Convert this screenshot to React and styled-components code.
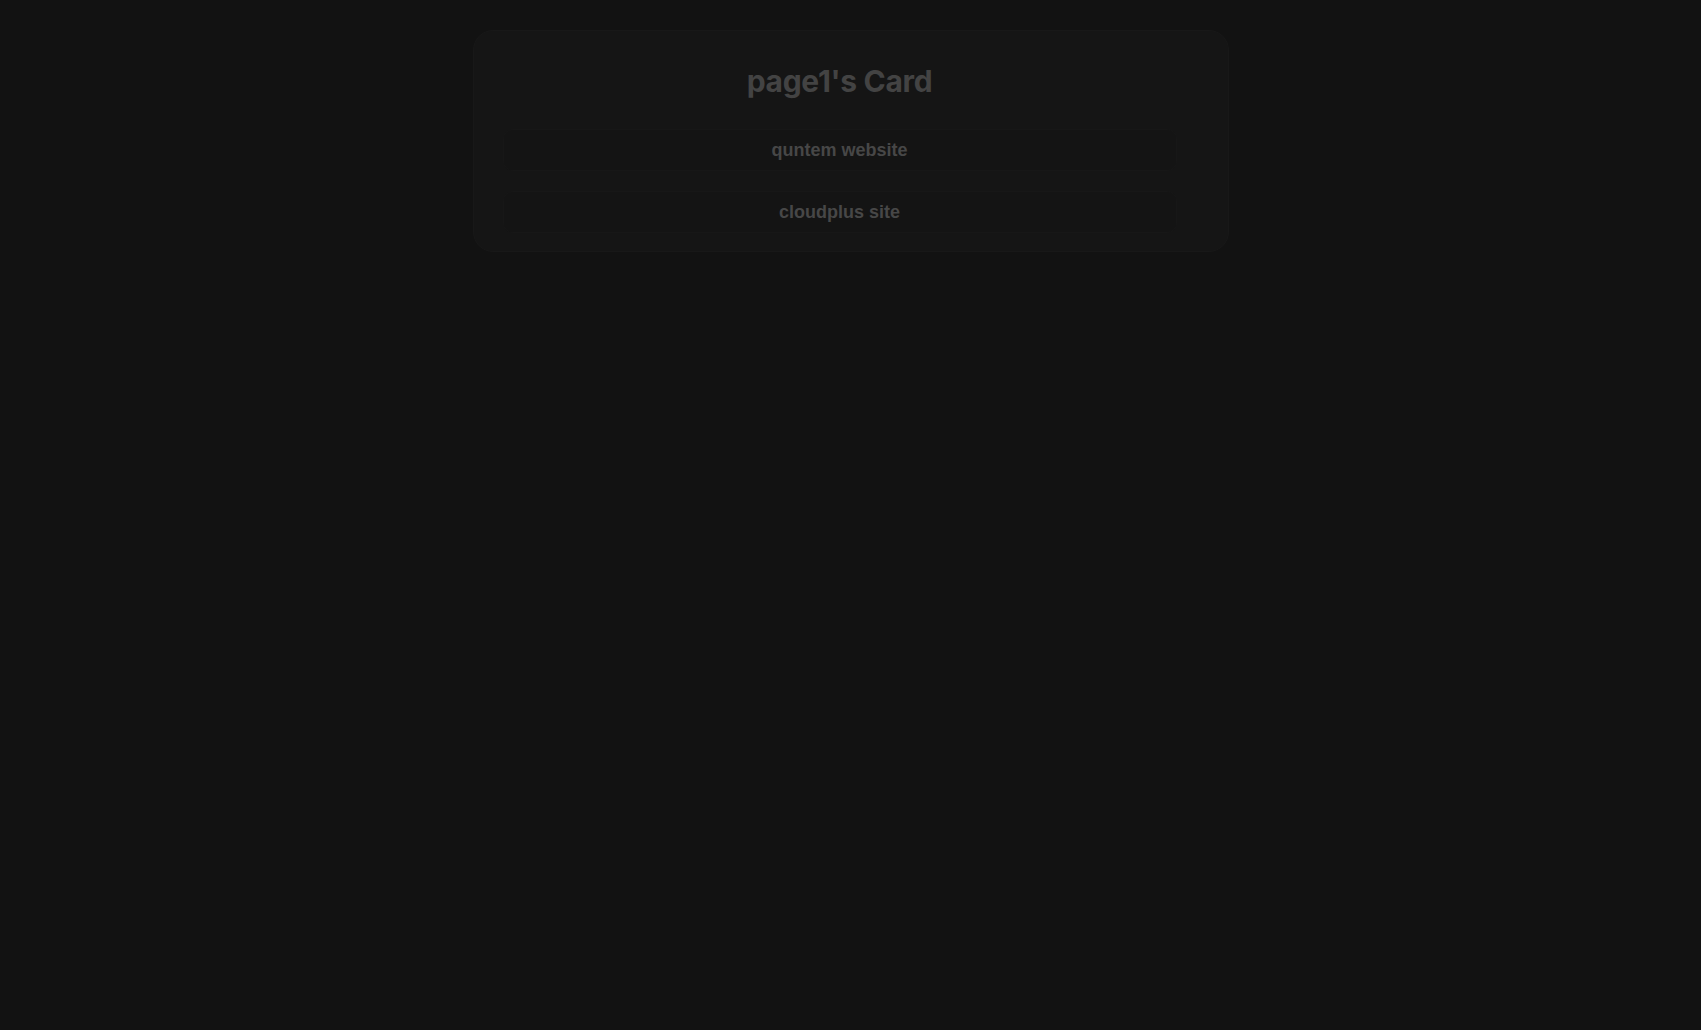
import React from 'react'
import styled, { createGlobalStyle } from 'styled-components'

const GlobalStyle = createGlobalStyle`
  html, body {
    margin: 0;
    padding: 0;
    background: #121212;
  }
  body {
    min-height: 100vh;
    font-family: "Liberation Sans", Arial, sans-serif;
  }
`

const Page = styled.main`
  display: flex;
  justify-content: center;
  padding-top: 30px;
`

const Card = styled.section`
  width: 756px;
  box-sizing: border-box;
  padding: 20px 51px 18px 29px;
  background: #151515;
  border: 1px solid #181818;
  border-radius: 20px;
  display: flex;
  flex-direction: column;
  gap: 20px;
`

const Title = styled.h1`
  margin: 11px 0 9px;
  text-align: center;
  font-family: Inter, "Open Sans", sans-serif;
  font-size: 30px;
  line-height: 38px;
  font-weight: 700;
  letter-spacing: -0.3px;
  color: #434343;
`

const LinkItem = styled.a`
  display: block;
  height: 40px;
  line-height: 40px;
  text-align: center;
  background: #141414;
  border: 1px solid #171717;
  border-radius: 10px;
  color: #474747;
  font-size: 18px;
  font-weight: 700;
  text-decoration: none;
`

const links = ['quntem website', 'cloudplus site']

export default function App() {
  return (
    <>
      <GlobalStyle />
      <Page>
        <Card>
          <Title>page1's Card</Title>
          {links.map((l) => (
            <LinkItem key={l} href="#">{l}</LinkItem>
          ))}
        </Card>
      </Page>
    </>
  )
}
